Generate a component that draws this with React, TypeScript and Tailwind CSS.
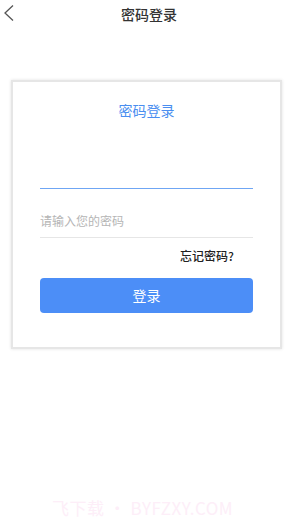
import React from 'react';

const App: React.FC = () => {
  return (
    <div
      className="relative w-[298px] h-[532px] bg-white overflow-hidden"
      style={{ fontFamily: '"Noto Sans CJK SC", "Noto Sans", sans-serif' }}
    >
      {/* header */}
      <div className="relative h-[27px] flex items-center justify-center">
        <button className="absolute left-[2px] top-[4px] text-[#555]">
          <svg width="14" height="18" viewBox="0 0 14 18" fill="none">
            <path d="M11 1.5 L3 9 L11 16.5" stroke="#555" strokeWidth="1.3" />
          </svg>
        </button>
        <h1 className="text-[14px] leading-none text-[#333] font-medium">密码登录</h1>
      </div>

      {/* card */}
      <div className="mt-[53px] ml-[11px] w-[271px] h-[269px] bg-white border-2 border-[#e6e6e6] shadow-[0_0_3px_rgba(0,0,0,0.12)] px-[27px] flex flex-col">
        <h2 className="mt-[19px] text-center text-[14px] leading-[18px] text-[#4a8ef0]">密码登录</h2>

        <div className="mt-[49px] h-[20px]">
          <input className="w-full h-full bg-transparent outline-none border-0 text-[12px]" />
        </div>
        <div className="h-px bg-[#6fa6f4]" />

        <div className="mt-[20px] h-[29px] border-b border-[#e6e6e6] flex items-start">
          <span className="text-[12px] leading-[24px] text-[#b5b5b5]">请输入您的密码</span>
        </div>

        <div className="mt-[10px] flex justify-end pr-[19px]">
          <span className="text-[12px] leading-[16px] text-[#222] font-medium">忘记密码?</span>
        </div>

        <button className="mt-[14px] h-[35px] w-full rounded-[4px] bg-[#4c8ef7] text-white text-[14px]">
          登录
        </button>
      </div>

      {/* watermark */}
      <div className="absolute left-[52px] top-[498px] text-[17px] leading-[20px] text-[#fdeef8] tracking-[0.5px]">
        飞下载 • BYFZXY.COM
      </div>
    </div>
  );
};

export default App;
